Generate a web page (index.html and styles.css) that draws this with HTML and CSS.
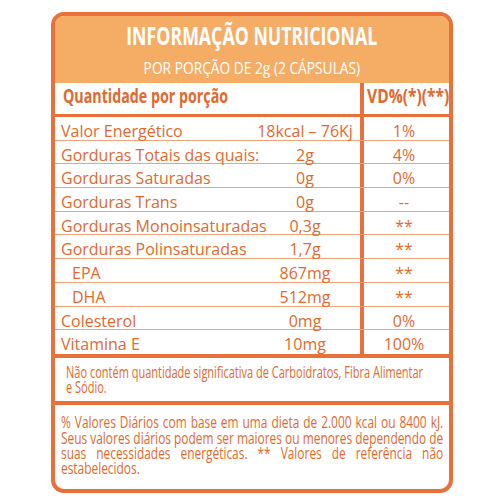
FILE: index.html
```html
<!DOCTYPE html>
<html lang="pt-BR">
<head>
    <meta charset="UTF-8">
    <title>Informação Nutricional</title>
    <link rel="stylesheet" href="styles.css">
</head>
<body>

    <div class="label">
        <!-- Cabeçalho -->
        <div class="head">
            <h1><span>INFORMAÇÃO NUTRICIONAL</span></h1>
            <p><span>POR PORÇÃO DE 2g (2 CÁPSULAS)</span></p>
        </div>

        <div class="row table-head">
            <div class="name"><span>Quantidade por porção</span></div>
            <div class="vd"><span>VD%(*)(**)</span></div>
        </div>

        <!-- Tabela -->
        <div class="rows">
            <div class="row"><div class="name">Valor Energético</div><div class="amount">18kcal – 76Kj</div><div class="vd">1%</div></div>
            <div class="row"><div class="name">Gorduras Totais das quais:</div><div class="amount">2g</div><div class="vd">4%</div></div>
            <div class="row"><div class="name">Gorduras Saturadas</div><div class="amount">0g</div><div class="vd">0%</div></div>
            <div class="row"><div class="name">Gorduras Trans</div><div class="amount">0g</div><div class="vd">--</div></div>
            <div class="row"><div class="name">Gorduras Monoinsaturadas</div><div class="amount">0,3g</div><div class="vd">**</div></div>
            <div class="row"><div class="name">Gorduras Polinsaturadas</div><div class="amount">1,7g</div><div class="vd">**</div></div>
            <div class="row"><div class="name sub">EPA</div><div class="amount">867mg</div><div class="vd">**</div></div>
            <div class="row"><div class="name sub">DHA</div><div class="amount">512mg</div><div class="vd">**</div></div>
            <div class="row"><div class="name">Colesterol</div><div class="amount">0mg</div><div class="vd">0%</div></div>
            <div class="row"><div class="name">Vitamina E</div><div class="amount">10mg</div><div class="vd">100%</div></div>
        </div>

        <div class="note">
            <p>Não contém quantidade significativa de Carboidratos, Fibra Alimentar<br>e Sódio.</p>
        </div>

        <div class="foot">
            <p>
                <span>% Valores Diários com base em uma dieta de 2.000 kcal ou 8400 kJ.</span>
                <span>Seus valores diários podem ser maiores ou menores dependendo de</span>
                <span>suas necessidades energéticas. ** Valores de referência não</span>
                estabelecidos.
            </p>
        </div>
    </div>

</body>
</html>
```

FILE: styles.css
```css
/* Rótulo nutricional */
body {
    margin: 0;
    background-color: white;
    color: #e0692f;
    font-family: "Open Sans", Arial, sans-serif;
}

.label {
    width: 394px;
    height: 473px;
    margin: 12px 0 0 51px;
    border: 4px solid #e8703a;
    border-radius: 13px;
    overflow: hidden;
}

/* cabeçalho laranja */
.head {
    background-color: #f5ad66;
    color: white;
    text-align: center;
    height: 67px;
}

.head span {
    display: inline-block;
    white-space: nowrap;
}

.head h1 {
    margin: 0;
    padding-top: 4px;
    font-size: 25px;
    line-height: 30px;
    font-weight: bold;
}

.head h1 span {
    transform: scaleX(0.71);
}

.head p {
    margin: 8px 0 0 0;
    font-size: 16px;
    line-height: 20px;
}

.head p span {
    transform: scaleX(0.86);
}

/* linhas da tabela */
.row {
    display: grid;
    grid-template-columns: 195px 110px 89px;
    grid-template-rows: 22.7px;
    height: 22.7px;
    border-bottom: 1px solid #efa27c;
    font-size: 16px;
    line-height: 22px;
}

.rows .row:last-child {
    border-bottom: none;
    grid-template-rows: 23.7px;
    height: 23.7px;
}

.row > div {
    padding-top: 3px;
}

.name {
    padding-left: 6px;
    white-space: nowrap;
}

.name.sub {
    padding-left: 17px;
}

.amount {
    text-align: center;
    white-space: nowrap;
}

.vd {
    text-align: center;
    padding-right: 5px;
    border-left: 4px solid #e8703a;
}

.table-head {
    grid-template-columns: 305px 89px;
    grid-template-rows: 31px;
    height: 31px;
    border-bottom: 3px solid #e8703a;
    font-weight: bold;
    font-size: 19px;
    line-height: 27px;
}

.table-head > div {
    padding-top: 0;
}

.table-head span {
    display: inline-block;
    white-space: nowrap;
    transform: scaleX(0.82);
    transform-origin: left center;
}

.table-head .name {
    padding-left: 8px;
}

.table-head .name span {
    transform: scaleX(0.75);
}

.table-head .vd {
    padding: 0 0 0 3px;
    text-align: left;
}

.rows {
    border-bottom: 4px solid #e8703a;
}

/* notas */
.note {
    height: 36.3px;
    padding: 7.2px 0 0 11px;
    border-bottom: 4px solid #e8703a;
}

.note p {
    margin: 0;
    width: 530px;
    font-size: 16px;
    line-height: 15px;
    white-space: nowrap;
    transform: scaleX(0.688);
    transform-origin: left top;
}

.foot {
    padding: 9px 0 0 6px;
}

.foot p {
    margin: 0;
    width: 546px;
    font-size: 17px;
    line-height: 15.3px;
    transform: scaleX(0.7);
    transform-origin: left top;
}

.foot span {
    display: block;
    text-align: justify;
    text-align-last: justify;
}
```
